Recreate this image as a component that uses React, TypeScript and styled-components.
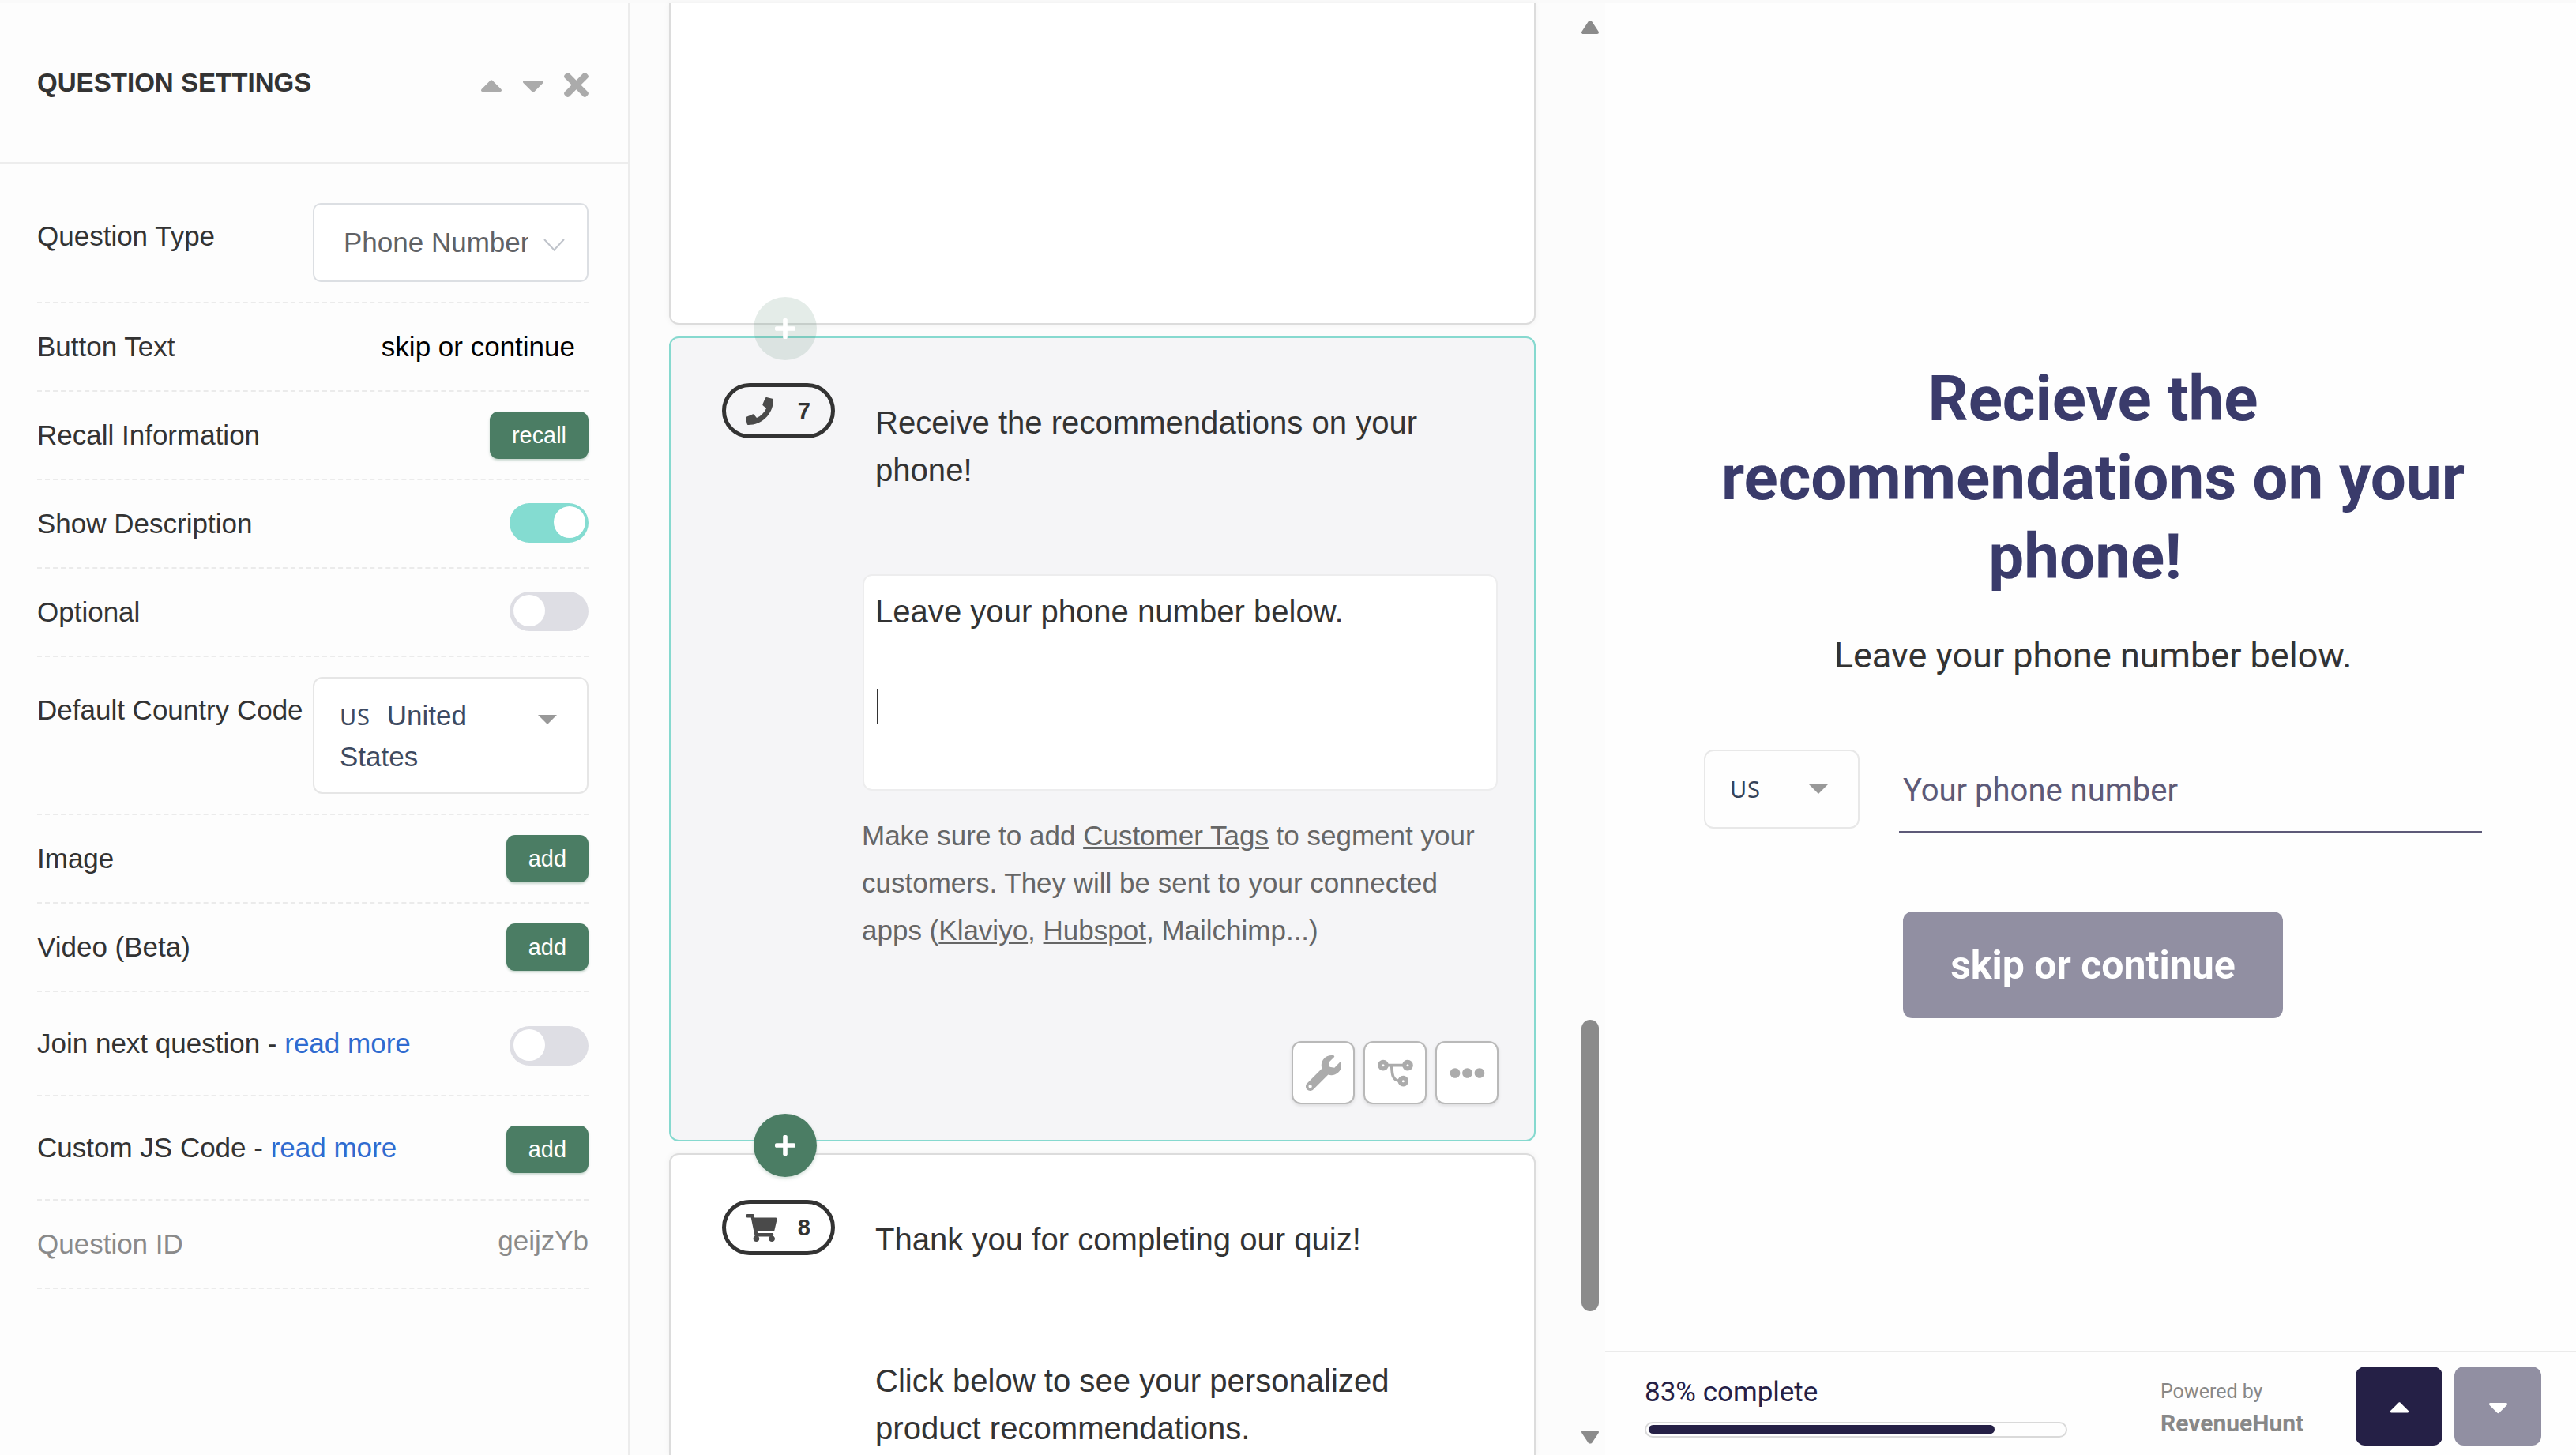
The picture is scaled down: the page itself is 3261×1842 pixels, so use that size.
import React from 'react';
import styled, { createGlobalStyle, css } from 'styled-components';
import {
  FaCaretDown,
  FaCaretUp,
  FaEllipsisH,
  FaPhone,
  FaPlus,
  FaShoppingCart,
  FaTimes,
  FaWrench,
} from 'react-icons/fa';

const sans = '"Liberation Sans", Arial, sans-serif';
const roboto = 'Roboto, sans-serif';
const flagFont = '"Noto Sans", "Open Sans", sans-serif';

const GlobalStyle = createGlobalStyle`
  *, *::before, *::after { box-sizing: border-box; }
  body { margin: 0; background: #fafafa; font-family: ${sans}; color: #333; }
  p, h1, h2 { margin: 0; font-weight: normal; }
  button { border: 0; padding: 0; margin: 0; font-family: inherit; }
`;

const Page = styled.div`
  width: 3261px;
  height: 1842px;
  padding-top: 4px;
  display: flex;
  overflow: hidden;
`;

const Icon = styled.span<{ $w: number; $h: number; $shift?: number }>`
  display: flex;
  flex: none;
  margin-top: ${(p) => p.$shift ?? 0}px;
  svg {
    display: block;
    width: ${(p) => p.$w}px;
    height: ${(p) => p.$h}px;
  }
`;

/* ---------- Settings sidebar ---------- */

const Sidebar = styled.aside`
  flex: none;
  width: 797px;
  background: #fdfdfd;
  border-right: 2px solid #ececec;
`;

const SidebarHeader = styled.header`
  display: flex;
  align-items: center;
  justify-content: space-between;
  height: 203px;
  padding: 0 50px 0 47px;
  border-bottom: 2px solid #ededed;
`;

const SidebarTitle = styled.h1`
  font-size: 33.1px;
  line-height: 40px;
  font-weight: bold;
`;

const HeaderActions = styled.div`
  display: flex;
  align-items: center;
  gap: 25px;
  margin-top: 6px;
  color: #ababab;
`;

const Settings = styled.div`
  padding: 0 50px 0 47px;
`;

const Row = styled.div<{ $height?: number; $top?: number; $muted?: boolean }>`
  display: flex;
  justify-content: space-between;
  align-items: center;
  height: ${(p) => p.$height ?? 112}px;
  border-bottom: 2px dashed #ebebeb;
  color: ${(p) => (p.$muted ? '#8a8a8a' : '#333')};
  ${(p) =>
    p.$top !== undefined &&
    css`
      align-items: flex-start;
      padding-top: ${p.$top}px;
    `}
`;

const Label = styled.span<{ $drop?: number }>`
  font-size: 35px;
  line-height: 40px;
  white-space: nowrap;
  margin-top: ${(p) => p.$drop ?? 0}px;
`;

const BlueLink = styled.a`
  color: #2f6bd0;
`;

const ButtonTextValue = styled(Label)`
  color: #000;
  margin-right: 17px;
`;

const IdValue = styled(Label)`
  margin-top: -8px;
`;

const GreenButton = styled.button<{ $shift?: number }>`
  height: 60px;
  padding: 0 28px;
  margin-top: ${(p) => p.$shift ?? 0}px;
  border-radius: 11px;
  background: #4b7d64;
  box-shadow: 0 2px 3px rgba(75, 125, 100, 0.3);
  color: #fff;
  font-size: 28.9px;
  line-height: 60px;
`;

const Toggle = styled.span<{ $on?: boolean; $shift?: number }>`
  display: flex;
  justify-content: ${(p) => (p.$on ? 'flex-end' : 'flex-start')};
  width: 100px;
  height: 50px;
  padding: 4px 4px 0 5px;
  margin-top: ${(p) => p.$shift ?? -2}px;
  border-radius: 25px;
  background: ${(p) => (p.$on ? '#84dcd1' : '#dedee4')};
`;

const Knob = styled.span`
  width: 40px;
  height: 40px;
  border-radius: 50%;
  background: #fff;
`;

const TypeSelect = styled.div`
  display: flex;
  align-items: center;
  width: 349px;
  height: 100px;
  padding-left: 37px;
  border: 2px solid #dcdfe3;
  border-radius: 10px;
  background: #fff;
  color: #606266;
`;

const TypeValue = styled.span`
  width: 233px;
  margin-right: 20px;
  overflow: hidden;
  white-space: nowrap;
  font-size: 35px;
  line-height: 44px;
`;

const CountrySelect = styled.div`
  display: flex;
  width: 349px;
  height: 148px;
  padding: 21px 0 0 32px;
  border: 2px solid #e6e6e6;
  border-radius: 12px;
  background: #fff;
  color: #3d4a61;
`;

const CountryName = styled.span`
  width: 251px;
  font-size: 35px;
  line-height: 52px;
`;

const Flag = styled.span`
  display: inline-block;
  width: 50px;
  font-family: ${flagFont};
  font-size: 29px;
  line-height: 40px;
  letter-spacing: 0.8px;
`;

const Triangle = styled.span<{ $drop?: number }>`
  width: 0;
  height: 0;
  margin-top: ${(p) => p.$drop ?? 0}px;
  border: 12px solid transparent;
  border-top-color: #999;
  border-bottom: 0;
`;

/* ---------- Question list ---------- */

const Builder = styled.main`
  flex: none;
  display: flex;
  justify-content: space-between;
  width: 1235px;
  padding: 0 7px 0 50px;
  background: #fcfcfc;
`;

const Cards = styled.div`
  display: flex;
  flex-direction: column;
  gap: 15px;
  width: 1097px;
`;

const Card = styled.section<{ $height: number; $active?: boolean; $cut?: 'top' | 'bottom' }>`
  position: relative;
  display: flex;
  flex: none;
  height: ${(p) => p.$height}px;
  border: 2px solid ${(p) => (p.$active ? '#86d9cf' : '#dcdcdc')};
  border-radius: 12px;
  background: ${(p) => (p.$active ? '#f5f5f7' : '#fff')};
  box-shadow: ${(p) => (p.$active ? 'none' : '0 0 8px rgba(0, 0, 0, 0.05)')};
  ${(p) => p.$cut === 'top' && 'border-top: 0; border-radius: 0 0 12px 12px;'}
  ${(p) => p.$cut === 'bottom' && 'border-bottom: 0; border-radius: 12px 12px 0 0;'}
`;

const AddCircle = styled.button<{ $faded?: boolean }>`
  position: absolute;
  z-index: 2;
  left: 105px;
  bottom: -47px;
  display: flex;
  align-items: center;
  justify-content: center;
  width: 80px;
  height: 80px;
  border-radius: 50%;
  background: ${(p) => (p.$faded ? 'rgba(75, 125, 100, 0.15)' : '#4b7d64')};
  box-shadow: ${(p) => (p.$faded ? 'none' : '0 2px 4px rgba(75, 125, 100, 0.25)')};
  color: #fff;
`;

const Pill = styled.div`
  display: flex;
  flex: none;
  align-items: center;
  justify-content: space-between;
  width: 143px;
  height: 70px;
  margin: 57px 36px 0 65px;
  padding: 0 26px 0 25px;
  border: 5px solid #333;
  border-radius: 35px;
  font-size: 29.12px;
  line-height: 36px;
  font-weight: bold;
  svg {
    color: #4a4a4a;
  }
`;

const CardBody = styled.div`
  display: flex;
  flex-direction: column;
  width: 804px;
  padding: 77px 0 45px;
`;

const CardTitle = styled.h2`
  width: 787px;
  padding-left: 15px;
  font-size: 40.1px;
  line-height: 60px;
`;

const CardCopy = styled(CardTitle).attrs({ as: 'p' })`
  margin-top: 119px;
`;

const DescriptionBox = styled.div`
  width: 804px;
  height: 274px;
  margin: 102px 0 0 -1px;
  padding: 15px 14px;
  border: 2px solid #ededee;
  border-radius: 12px;
  background: #fff;
  font-size: 40.1px;
  line-height: 60px;
`;

const TextCursor = styled.div`
  width: 2px;
  height: 44px;
  margin: 68px 0 0 2px;
  background: #333;
`;

const Hint = styled.p`
  margin: 27px 0 0 -2px;
  width: 803px;
  color: #666;
  font-size: 35px;
  line-height: 60px;
  a {
    text-decoration: underline;
  }
`;

const CardTools = styled.div`
  display: flex;
  justify-content: flex-end;
  gap: 11px;
  margin-top: auto;
`;

const ToolButton = styled.button`
  display: flex;
  align-items: center;
  justify-content: center;
  width: 80px;
  height: 80px;
  border: 2px solid #b9b9b9;
  border-radius: 12px;
  background: #fff;
  box-shadow: 0 2px 4px rgba(0, 0, 0, 0.1);
  color: #ababab;
`;

const ScrollBar = styled.div`
  display: flex;
  flex-direction: column;
  align-items: center;
  width: 24px;
  padding: 22px 0 14px;
  svg {
    display: block;
  }
`;

const ScrollTrack = styled.div`
  flex: 1;
  padding-top: 1247px;
`;

const ScrollThumb = styled.div`
  width: 22px;
  height: 369px;
  border-radius: 11px;
  background: #8b8b8b;
`;

/* ---------- Quiz preview ---------- */

const Preview = styled.section`
  flex: 1;
  display: flex;
  flex-direction: column;
  background: #fefefe;
  font-family: ${roboto};
`;

const PreviewBody = styled.div`
  flex: 1;
  display: flex;
  flex-direction: column;
  align-items: center;
  padding: 451px 0 0 6px;
`;

const PreviewTitle = styled.h1`
  width: 985px;
  color: #3a3b6b;
  font-size: 80px;
  line-height: 100px;
  font-weight: bold;
  text-align: center;
`;

const PreviewText = styled.p`
  margin-top: 45px;
  font-size: 45px;
  line-height: 60px;
`;

const PhoneRow = styled.div`
  display: flex;
  width: 985px;
  margin-top: 89px;
`;

const CodeSelect = styled.div`
  display: flex;
  align-items: center;
  justify-content: space-between;
  width: 197px;
  height: 100px;
  padding: 0 38px 0 31px;
  border: 2px solid #e8e8e8;
  border-radius: 12px;
  color: #34435a;
`;

const PhoneInput = styled.div`
  width: 738px;
  height: 105px;
  margin-left: 50px;
  padding: 22px 0 0 5px;
  border-bottom: 2px solid #5d5a78;
  color: #5d5a78;
  font-size: 40px;
  line-height: 60px;
`;

const ContinueButton = styled.button`
  width: 481px;
  height: 135px;
  margin-top: 100px;
  border-radius: 12px;
  background: #918fa2;
  color: #fff;
  font-size: 50px;
  font-weight: bold;
`;

const Footer = styled.footer`
  display: flex;
  align-items: center;
  height: 132px;
  padding: 6px 44px 0 50px;
  border-top: 2px solid #ebebeb;
`;

const Progress = styled.div`
  width: 535px;
  padding-top: 2px;
  margin-right: 118px;
  color: #252046;
  font-size: 35px;
  line-height: 42px;
`;

const ProgressTrack = styled.div`
  height: 20px;
  margin-top: 16px;
  padding: 2px 3px;
  border: 2px solid #d9d9d9;
  border-radius: 10px;
`;

const ProgressFill = styled.div`
  width: 438px;
  height: 11px;
  border-radius: 6px;
  background: #252046;
`;

const Powered = styled.div`
  display: flex;
  flex-direction: column;
  width: 247px;
  padding-top: 4px;
  color: #888;
  font-size: 25px;
  line-height: 40px;
  strong {
    font-size: 30px;
  }
`;

const NavButtons = styled.div`
  display: flex;
  gap: 15px;
`;

const NavButton = styled.button<{ $muted?: boolean }>`
  display: flex;
  align-items: center;
  justify-content: center;
  width: 110px;
  height: 100px;
  border-radius: 12px;
  background: ${(p) => (p.$muted ? '#918fa2' : '#252046')};
  color: #fff;
`;

const Chevron = () => (
  <svg width="27" height="16" viewBox="0 0 27 16" fill="none" stroke="#bfc3ca" strokeWidth="2" strokeLinecap="round">
    <path d="M1.5 1.5 13.5 14.5 25.5 1.5" />
  </svg>
);

const BranchGlyph = () => (
  <svg viewBox="0 0 135 135" fill="none" stroke="currentColor">
    <path d="M20 38H114M53 38C55 70 55 96 84 97" strokeWidth="11" />
    <circle cx="21" cy="38" r="12.5" strokeWidth="16" fill="#fff" />
    <circle cx="114" cy="38" r="12.5" strokeWidth="16" fill="#fff" />
    <circle cx="97" cy="98" r="12.5" strokeWidth="16" fill="#fff" />
  </svg>
);

const ScrollArrow = ({ down }: { down?: boolean }) => (
  <svg width="24" height="18" viewBox="0 0 24 18" fill="#8b8b8b" stroke="#8b8b8b" strokeWidth="4" strokeLinejoin="round">
    <path d={down ? 'M3 3H21L12.8 15.5H11.2Z' : 'M3 15H21L12.8 2.5H11.2Z'} />
  </svg>
);

const AddRow = ({ label }: { label: string }) => (
  <Row>
    <Label>{label}</Label>
    <GreenButton>add</GreenButton>
  </Row>
);

export default function App() {
  return (
    <>
      <GlobalStyle />
      <Page>
        <Sidebar>
          <SidebarHeader>
            <SidebarTitle>QUESTION SETTINGS</SidebarTitle>
            <HeaderActions>
              <Icon $w={28} $h={45}><FaCaretUp /></Icon>
              <Icon $w={28} $h={45}><FaCaretDown /></Icon>
              <Icon $w={31} $h={45}><FaTimes /></Icon>
            </HeaderActions>
          </SidebarHeader>
          <Settings>
            <Row $height={177} $top={50}>
              <Label $drop={22}>Question Type</Label>
              <TypeSelect>
                <TypeValue>Phone Number</TypeValue>
                <Icon $w={27} $h={16} $shift={5}><Chevron /></Icon>
              </TypeSelect>
            </Row>
            <Row>
              <Label>Button Text</Label>
              <ButtonTextValue>skip or continue</ButtonTextValue>
            </Row>
            <Row>
              <Label>Recall Information</Label>
              <GreenButton>recall</GreenButton>
            </Row>
            <Row>
              <Label>Show Description</Label>
              <Toggle $on><Knob /></Toggle>
            </Row>
            <Row>
              <Label>Optional</Label>
              <Toggle><Knob /></Toggle>
            </Row>
            <Row $height={200} $top={25}>
              <Label $drop={22}>Default Country Code</Label>
              <CountrySelect>
                <CountryName><Flag>US</Flag> United States</CountryName>
                <Triangle $drop={25} />
              </CountrySelect>
            </Row>
            <AddRow label="Image" />
            <AddRow label="Video (Beta)" />
            <Row $height={132}>
              <Label>Join next question - <BlueLink>read more</BlueLink></Label>
              <Toggle $shift={6}><Knob /></Toggle>
            </Row>
            <Row $height={132}>
              <Label>Custom JS Code - <BlueLink>read more</BlueLink></Label>
              <GreenButton $shift={4}>add</GreenButton>
            </Row>
            <Row $muted>
              <Label>Question ID</Label>
              <IdValue>geijzYb</IdValue>
            </Row>
          </Settings>
        </Sidebar>

        <Builder>
          <Cards>
            <Card $height={407} $cut="top">
              <AddCircle $faded>
                <Icon $w={26} $h={30}><FaPlus /></Icon>
              </AddCircle>
            </Card>
            <Card $height={1019} $active>
              <Pill>
                <Icon $w={35} $h={35}><FaPhone /></Icon>
                7
              </Pill>
              <CardBody>
                <CardTitle>Receive the recommendations on your phone!</CardTitle>
                <DescriptionBox>
                  <p>Leave your phone number below.</p>
                  <TextCursor />
                </DescriptionBox>
                <Hint>
                  Make sure to add <a>Customer Tags</a> to segment your customers. They will be sent to your
                  connected apps (<a>Klaviyo</a>, <a>Hubspot</a>, Mailchimp...)
                </Hint>
                <CardTools>
                  <ToolButton><Icon $w={45} $h={45}><FaWrench /></Icon></ToolButton>
                  <ToolButton><Icon $w={45} $h={45}><BranchGlyph /></Icon></ToolButton>
                  <ToolButton><Icon $w={45} $h={45}><FaEllipsisH /></Icon></ToolButton>
                </CardTools>
              </CardBody>
              <AddCircle>
                <Icon $w={26} $h={30}><FaPlus /></Icon>
              </AddCircle>
            </Card>
            <Card $height={382} $cut="bottom">
              <Pill>
                <Icon $w={40} $h={35}><FaShoppingCart /></Icon>
                8
              </Pill>
              <CardBody>
                <CardTitle>Thank you for completing our quiz!</CardTitle>
                <CardCopy>Click below to see your personalized product recommendations.</CardCopy>
              </CardBody>
            </Card>
          </Cards>
          <ScrollBar>
            <ScrollArrow />
            <ScrollTrack><ScrollThumb /></ScrollTrack>
            <ScrollArrow down />
          </ScrollBar>
        </Builder>

        <Preview>
          <PreviewBody>
            <PreviewTitle>Recieve the recommendations on your phone!&nbsp;</PreviewTitle>
            <PreviewText>Leave your phone number below.</PreviewText>
            <PhoneRow>
              <CodeSelect>
                <Flag>US</Flag>
                <Triangle />
              </CodeSelect>
              <PhoneInput>Your phone number</PhoneInput>
            </PhoneRow>
            <ContinueButton>skip or continue</ContinueButton>
          </PreviewBody>
          <Footer>
            <Progress>
              83% complete
              <ProgressTrack><ProgressFill /></ProgressTrack>
            </Progress>
            <Powered>
              Powered by
              <strong>RevenueHunt</strong>
            </Powered>
            <NavButtons>
              <NavButton><Icon $w={25} $h={40} $shift={2}><FaCaretUp /></Icon></NavButton>
              <NavButton $muted><Icon $w={25} $h={40} $shift={2}><FaCaretDown /></Icon></NavButton>
            </NavButtons>
          </Footer>
        </Preview>
      </Page>
    </>
  );
}
